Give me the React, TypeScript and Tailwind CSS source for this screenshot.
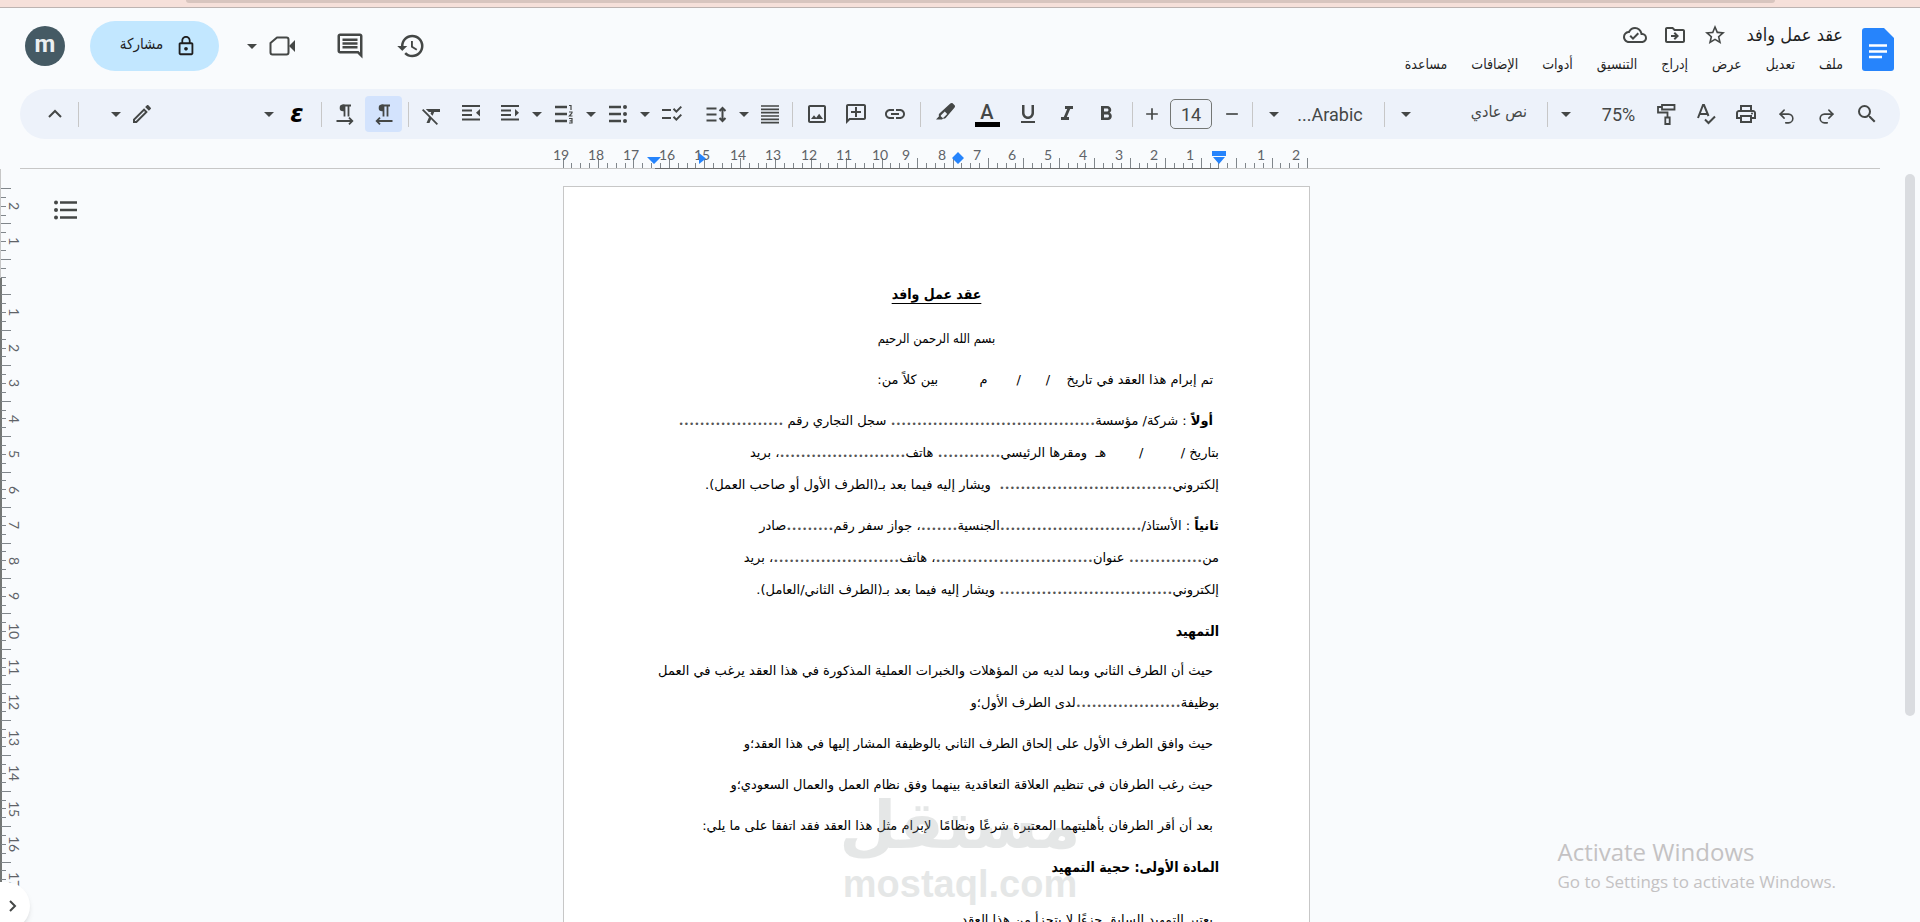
import type { ReactNode } from 'react';
import clsx from 'clsx';
import { Redo2, Undo2 } from 'lucide-react';
import {
  MdAdd,
  MdArrowDropDown,
  MdChecklistRtl,
  MdFormatBold,
  MdFormatClear,
  MdFormatItalic,
  MdFormatUnderlined,
  MdHistory,
  MdInsertLink,
  MdLockOutline,
  MdOutlineAddComment,
  MdOutlineCloudDone,
  MdOutlineComment,
  MdOutlineDriveFileMove,
  MdOutlineEdit,
  MdOutlineImage,
  MdOutlinePrint,
  MdRemove,
  MdSearch,
  MdStarBorder
} from 'react-icons/md';

const menus = ['ملف', 'تعديل', 'عرض', 'إدراج', 'التنسيق', 'أدوات', 'الإضافات', 'مساعدة'];

type Paragraph = {
  lines: string[];
  lead?: string;
  kind?: 'title' | 'center' | 'heading' | 'article';
  indent?: boolean;
};

const paragraphs: Paragraph[] = [
  { kind: 'title', lines: ['عقد عمل وافد'] },
  { kind: 'center', lines: ['بسم الله الرحمن الرحيم'] },
  { indent: true, lines: ['تم إبرام هذا العقد في تاريخ    /      /       م          بين كلاً من:'] },
  {
    indent: true,
    lead: 'أولاً',
    lines: [
      ' : شركة/ مؤسسة....................................... سجل التجاري رقم ....................',
      'بتاريخ /         /        هـ  ومقرها الرئيسي............ هاتف........................، بريد',
      'إلكتروني.................................  ويشار إليه فيما بعد بـ(الطرف الأول أو صاحب العمل).'
    ]
  },
  {
    lead: 'ثانياً',
    lines: [
      ' : الأستاذ/...........................الجنسية.......، جواز سفر رقم.........صادر',
      'من.............. عنوان..............................، هاتف........................، بريد',
      'إلكتروني................................. ويشار إليه فيما بعد بـ(الطرف الثاني/العامل).'
    ]
  },
  { kind: 'heading', lines: ['التمهيد'] },
  {
    indent: true,
    lines: [
      'حيث أن الطرف الثاني وبما لديه من المؤهلات والخبرات العملية المذكورة في هذا العقد يرغب في العمل',
      'بوظيفة....................لدى الطرف الأول؛و'
    ]
  },
  { indent: true, lines: ['حيث وافق الطرف الأول على إلحاق الطرف الثاني بالوظيفة المشار إليها في هذا العقد؛و'] },
  { indent: true, lines: ['حيث رغب الطرفان في تنظيم العلاقة التعاقدية بينهما وفق نظام العمل والعمال السعودي؛و'] },
  { indent: true, lines: ['بعد أن أقر الطرفان بأهليتهما المعتبرة شرعًا ونظامًا  لإبرام مثل هذا العقد فقد اتفقا على ما يلي:'] },
  { kind: 'article', lines: ['المادة الأولى: حجية التمهيد'] },
  { indent: true, lines: ['يعتبر التمهيد السابق جزءًا لا يتجزأ من هذا العقد'] }
];

function Tool({ label, className, children }: { label: string; className?: string; children: ReactNode }) {
  return (
    <button
      aria-label={label}
      className={clsx('flex h-9 shrink-0 items-center justify-center text-2xl text-[#444746]', className)}>
      {children}
    </button>
  );
}

function Caret({ label, className = 'w-[18px]' }: { label: string; className?: string }) {
  return (
    <Tool label={label} className={className}>
      <MdArrowDropDown className="shrink-0" />
    </Tool>
  );
}

function Divider({ className = 'w-3' }: { className?: string }) {
  return (
    <div className={clsx('flex h-[25px] shrink-0 justify-center', className)}>
      <div className="w-px bg-[#c7c7c7]" />
    </div>
  );
}

function Glyph({ children, strokeWidth = 2 }: { children: ReactNode; strokeWidth?: number }) {
  return (
    <svg width="24" height="24" viewBox="0 0 24 24" fill="none" stroke="currentColor" strokeWidth={strokeWidth} className="shrink-0">
      {children}
    </svg>
  );
}

function PilcrowIcon({ rtl }: { rtl?: boolean }) {
  return (
    <Glyph strokeWidth={1.8}>
      <path d="M18 3.500H9.500M11.500 3v11.500M15.500 3v11.500" />
      <path d="M11.500 2.600H10a3.300 3.300 0 0 0 0 6.600h1.500z" fill="currentColor" stroke="none" />
      <path d={rtl ? 'M20.500 19H4.500M8 15.700 4.700 19 8 22.300' : 'M3.500 19h16M16 15.700l3.300 3.300-3.300 3.300'} />
    </Glyph>
  );
}

function IndentIcon({ decrease }: { decrease?: boolean }) {
  return (
    <Glyph>
      <path d="M3 4h18M3 8.500h10M3 13h10M3 17.500h18" />
      <path d={decrease ? 'M17 7l4 3.800-4 3.800z' : 'M21 7l-4 3.800 4 3.800z'} fill="currentColor" stroke="none" />
    </Glyph>
  );
}

function NumberedIcon() {
  return (
    <Glyph strokeWidth={2.4}>
      <path d="M3 5h12M3 12h12M3 19h12" />
      <path d="M17 3.500h2v4.500M17 10h3v.8L17.400 14H20.500M17 16.500h3v4.500h-3m.6-2.200h2.400" strokeWidth="1.200" />
    </Glyph>
  );
}

function BulletsIcon() {
  return (
    <Glyph strokeWidth={2.4}>
      <path d="M3 5h12M3 12h12M3 19h12" />
      <g fill="currentColor" stroke="none">
        <circle cx="19" cy="5" r="2" />
        <circle cx="19" cy="12" r="2" />
        <circle cx="19" cy="19" r="2" />
      </g>
    </Glyph>
  );
}

function SpacingIcon() {
  return (
    <Glyph>
      <path d="M2.500 6.500h10M2.500 12.500h10M2.500 18.500h10M18.500 6v13M15.500 9l3-3 3 3M15.500 16l3 3 3-3" />
    </Glyph>
  );
}

function JustifyIcon() {
  return (
    <Glyph strokeWidth={1.7}>
      <path d="M3 4h18M3 7.300h18M3 10.600h18M3 14h18M3 17.300h18M3 20.600h18" />
    </Glyph>
  );
}

function PaintIcon() {
  return (
    <Glyph strokeWidth={1.8}>
      <path d="M8 3h12.500v4.500H8zM8 5H4v5.500h9.500V15M11.300 15.500h4.400V22h-4.400z" />
    </Glyph>
  );
}

function SpellIcon() {
  return (
    <Glyph>
      <path d="M4 16 9 3h1l4.500 11M6 12h7M11 17.500l3.500 3.500L21 14.500" />
    </Glyph>
  );
}

function HighlighterIcon() {
  return (
    <svg width="24" height="24" viewBox="0 0 24 24" fill="currentColor">
      <path d="M16.300 1.600 5.400 11.500c-.6.6-.8 1.300-.6 2.100l.2.700L2 17.500h6l1-1c1 .3 2 .1 2.700-.6L20.600 5.400c.6-.7.6-1.500 0-2.100l-2-2c-.7-.5-1.600-.4-2.300.3zM7 13.200l3.800-3.600 2.400 2.400-3.500 3.600c-.5.5-1.100.5-1.600 0l-1.100-1.100c-.4-.4-.4-.9 0-1.300z" />
    </svg>
  );
}

function MeetIcon() {
  return (
    <svg width="30" height="30" viewBox="0 0 30 30">
      <path d="M10 6.500h9.500a2 2 0 0 1 2 2v13a2 2 0 0 1-2 2h-14a2 2 0 0 1-2-2V12z" fill="none" stroke="currentColor" strokeWidth="2" strokeLinejoin="round" />
      <path d="M22 15l6-6v12z" fill="currentColor" />
    </svg>
  );
}

function DocsLogo() {
  return (
    <svg width="32" height="43" viewBox="0 0 32 43" className="mt-2 shrink-0">
      <path d="M3 0h19l10 10v30a3 3 0 0 1-3 3H3a3 3 0 0 1-3-3V3a3 3 0 0 1 3-3z" fill="#2684fc" />
      <path d="M7 17.500h18M7 23.500h18M7 29h13" stroke="#fff" strokeWidth="2.400" />
    </svg>
  );
}

function Header() {
  return (
    <header className="flex h-[81px] shrink-0 justify-between pr-[26px] pl-[25px] text-[#444746]">
      <div className="flex h-[76px] items-center">
        <button
          aria-label="الحساب"
          className="size-10 rounded-full bg-[#455a64] pb-1 font-['Roboto',sans-serif] text-2xl leading-none font-bold text-[#eceff1]">
          m
        </button>
        <button className="ml-[25px] flex h-[50px] w-[129px] items-center justify-center gap-3 rounded-full bg-[#c2e7ff] pl-2 text-[15px] text-[#1f1f1f]">
          <span className="pb-1">مشاركة</span>
          <MdLockOutline className="text-[22px]" />
        </button>
        <Caret label="خيارات الاجتماع" className="ml-[23px] w-5" />
        <Tool label="اجتماع" className="ml-[5px] w-[30px]">
          <MeetIcon />
        </Tool>
        <Tool label="التعليقات" className="ml-[33px] w-10">
          <MdOutlineComment className="text-[30px]" />
        </Tool>
        <Tool label="السجلّ" className="ml-[21px] w-10">
          <MdHistory className="text-[30px]" />
        </Tool>
      </div>
      <div dir="rtl" className="flex items-start gap-[19px] pt-3">
        <DocsLogo />
        <div className="flex flex-col gap-1">
          <div className="flex h-[30px] items-center gap-4">
            <h1 className="w-[100px] text-[18px] leading-7 whitespace-nowrap text-[#1f1f1f]">عقد عمل وافد</h1>
            <Tool label="تمييز بنجمة" className="w-6">
              <MdStarBorder />
            </Tool>
            <Tool label="نقل" className="w-6">
              <MdOutlineDriveFileMove className="shrink-0" />
            </Tool>
            <Tool label="حالة المستند" className="w-6">
              <MdOutlineCloudDone className="shrink-0" />
            </Tool>
          </div>
          <nav className="flex gap-6 text-sm leading-5 whitespace-nowrap text-[#1f1f1f]">
            {menus.map((menu) => (
              <button key={menu}>{menu}</button>
            ))}
          </nav>
        </div>
      </div>
    </header>
  );
}

function Toolbar() {
  return (
    <div className="mx-5 flex h-[50px] shrink-0 items-center rounded-full bg-[#edf2fa] pr-3 pl-[17px] font-['Roboto','DejaVu_Sans_Condensed',sans-serif] text-[#444746]">
      <Tool label="إخفاء القوائم" className="w-[35px]">
        <svg width="14" height="10" viewBox="0 0 14 10" fill="none" stroke="currentColor" strokeWidth="2">
          <path d="m1 8 6-6 6 6" />
        </svg>
      </Tool>
      <Divider />
      <Caret label="الوضع" className="ml-[22px] w-5" />
      <Tool label="تعديل" className="w-8">
        <MdOutlineEdit />
      </Tool>
      <div className="flex-1" />
      <Caret label="أدوات الإدخال" className="w-5" />
      <Tool label="إدخال بالعربية" className="w-9 font-['DejaVu_Sans',sans-serif] font-bold text-black">
        <span className="italic">ε</span>
      </Tool>
      <Divider />
      <Tool label="من اليسار إلى اليمين" className="w-9">
        <PilcrowIcon />
      </Tool>
      <Tool label="من اليمين إلى اليسار" className="ml-[2px] w-[37px] rounded bg-[#d3e3fd] text-[#041e49]">
        <PilcrowIcon rtl />
      </Tool>
      <Divider />
      <Tool label="محو التنسيق" className="w-9 pt-1">
        <MdFormatClear />
      </Tool>
      <Tool label="زيادة المسافة البادئة" className="w-[42px]">
        <IndentIcon />
      </Tool>
      <Tool label="إنقاص المسافة البادئة" className="w-9">
        <IndentIcon decrease />
      </Tool>
      <Caret label="خيارات القائمة المرقّمة" />
      <Tool label="قائمة مرقّمة" className="w-9">
        <NumberedIcon />
      </Tool>
      <Caret label="خيارات القائمة النقطية" />
      <Tool label="قائمة نقطية" className="w-9">
        <BulletsIcon />
      </Tool>
      <Caret label="خيارات قائمة التحقّق" />
      <Tool label="قائمة تحقّق" className="w-9">
        <MdChecklistRtl />
      </Tool>
      <Tool label="تباعد الأسطر" className="ml-2 w-9">
        <SpacingIcon />
      </Tool>
      <Caret label="المحاذاة" className="w-5" />
      <Tool label="ضبط" className="w-8">
        <JustifyIcon />
      </Tool>
      <Divider />
      <Tool label="إدراج صورة" className="w-[38px]">
        <MdOutlineImage />
      </Tool>
      <Tool label="إضافة تعليق" className="w-10">
        <MdOutlineAddComment className="-scale-x-100" />
      </Tool>
      <Tool label="إدراج رابط" className="w-[38px]">
        <MdInsertLink />
      </Tool>
      <Divider />
      <Tool label="لون التمييز" className="w-10">
        <HighlighterIcon />
      </Tool>
      <Tool label="لون النص" className="w-[42px] flex-col">
        <span className="text-xl leading-5 font-medium">A</span>
        <span className="h-[5px] w-[25px] bg-black" />
      </Tool>
      <Tool label="تسطير" className="w-10">
        <MdFormatUnderlined />
      </Tool>
      <Tool label="مائل" className="w-[38px]">
        <MdFormatItalic />
      </Tool>
      <Tool label="غامق" className="w-10">
        <MdFormatBold />
      </Tool>
      <Divider />
      <Tool label="تكبير الخط" className="w-7">
        <MdAdd className="text-xl" />
      </Tool>
      <input
        aria-label="حجم الخط"
        defaultValue="14"
        className="mx-1 h-[30px] w-[42px] shrink-0 rounded-[5px] border border-[#747775] text-center text-[18px]"
      />
      <Tool label="تصغير الخط" className="w-8">
        <MdRemove className="text-xl" />
      </Tool>
      <Divider className="w-2" />
      <Caret label="قائمة الخطوط" className="ml-2 w-5" />
      <button className="h-9 w-24 shrink-0 pr-1 text-[18px]">...Arabic</button>
      <Divider className="w-2" />
      <Caret label="قائمة الأنماط" className="ml-2 w-5" />
      <button dir="rtl" className="h-9 w-[127px] shrink-0 pr-4 pb-1 text-right text-base">
        نص عادي
      </button>
      <Divider className="w-2" />
      <Caret label="خيارات التكبير" className="w-[30px]" />
      <button className="ml-[10px] h-9 w-[55px] shrink-0 text-[18px]">75%</button>
      <Tool label="نسخ التنسيق" className="w-10">
        <PaintIcon />
      </Tool>
      <Tool label="التدقيق الإملائي" className="w-10">
        <SpellIcon />
      </Tool>
      <Tool label="طباعة" className="w-10">
        <MdOutlinePrint />
      </Tool>
      <Tool label="تراجع" className="w-10 pt-1">
        <Undo2 size={19} />
      </Tool>
      <Tool label="إعادة" className="w-10 pt-1">
        <Redo2 size={19} />
      </Tool>
      <Tool label="بحث" className="w-[42px]">
        <MdSearch />
      </Tool>
    </div>
  );
}

// One centimetre at 75% zoom.
const CM = 35.45;
const range = (n: number) => Array.from({ length: n }, (_, i) => i);

function HorizontalRuler() {
  const labels = ['2', '1', '', ...range(19).map((i) => String(i + 1))];
  return (
    <svg width="764" height="30" viewBox="0 0 764 30" className="shrink-0 font-['Lato',sans-serif] text-sm">
      {range(85).map((i) => {
        const x = Math.round(753 - (i * CM) / 4);
        return <path key={i} d={`M${x + 0.5} ${i % 4 ? 24 : 19}V29`} stroke="#80868b" />;
      })}
      {labels.map((label, i) => (
        <text
          key={i}
          x={Math.round(753 - i * CM) - (label.length > 1 ? 2 : 11)}
          y="21"
          textAnchor="middle"
          fill="#5f6368">
          {label}
        </text>
      ))}
      <path d="M101 29.500H665" stroke="#6b6b6b" />
      <path d="M93 18h14l-7 7zM145 14l7 5.500-7 5.500zM404 13l6 6-6 6-6-6zM658 12h14v5h-14zM659 18h12l-6 7z" fill="#2684fc" />
    </svg>
  );
}

function VerticalRuler() {
  const labels = ['2', '1', '', ...range(17).map((i) => String(i + 1))];
  return (
    <svg width="24" height="754" viewBox="0 0 24 754" className="shrink-0 font-['Lato',sans-serif] text-sm">
      <path d="M.5 0v109" stroke="#c7c7c7" />
      <path d="M1 109v645" stroke="#747775" strokeWidth="2" />
      {range(79).map((i) => {
        const y = Math.round(19 + (i * CM) / 4);
        return <path key={i} d={`M1 ${y + 0.5}H${i % 4 ? 6 : 11}`} stroke="#80868b" />;
      })}
      {labels.map((label, i) => (
        <text key={i} transform={`translate(9 ${Math.round(37 + i * CM)}) rotate(90)`} textAnchor="middle" fill="#5f6368">
          {label}
        </text>
      ))}
    </svg>
  );
}

function Line({ text, lead }: { text: string; lead?: string }) {
  // Blanks to fill in are set larger than the words around them.
  const parts = text.split(/(\.{5,})/);
  return (
    <>
      {lead && <b>{lead}</b>}
      {parts.map((part, i) =>
        part.startsWith('.....') ? (
          <span key={i} className="font-['Liberation_Serif',serif] text-[21px] leading-none text-[#555555]">
            {part}
          </span>
        ) : (
          part
        )
      )}
    </>
  );
}

function Page() {
  return (
    <article
      dir="rtl"
      className="w-[747px] shrink-0 border border-[#c7c7c7] bg-white pt-[91px] pr-[90px] pb-[90px] font-['DejaVu_Sans',sans-serif] text-[13px] text-black">
      {paragraphs.map(({ lines, lead, kind, indent }, index) => (
        <div
          key={index}
          className={clsx('whitespace-pre', {
            'mb-[9px]': !kind || kind === 'center',
            'mb-2': kind === 'heading',
            "pl-[90px] text-center font-['DejaVu_Sans_Condensed',sans-serif]": kind === 'title' || kind === 'center',
            'mb-[13px] text-sm font-bold underline underline-offset-4': kind === 'title',
            "font-['DejaVu_Sans_Condensed',sans-serif] text-sm font-bold": kind === 'heading' || kind === 'article',
            'mb-[21px]': kind === 'article'
          })}>
          {lines.map((line, i) => (
            <p key={i} className={clsx('h-8 leading-8', indent && i === 0 && 'pr-[6px]')}>
              <Line text={line} lead={i === 0 ? lead : undefined} />
            </p>
          ))}
        </div>
      ))}
    </article>
  );
}

export default function App() {
  return (
    <div className="relative flex h-screen flex-col overflow-hidden bg-[#f9fbfd] font-['DejaVu_Sans_Condensed','DejaVu_Sans',sans-serif]">
      <div className="h-2 shrink-0 border-b border-[#bdb3b1] bg-[#f6e0da] pr-[145px] pl-[186px]">
        <div className="h-[3px] rounded-b-lg bg-[#d8c5bf]" />
      </div>
      <Header />
      <Toolbar />
      <div className="mr-10 ml-5 flex h-[30px] shrink-0 justify-center border-b border-[#c7c7c7] pr-7">
        <HorizontalRuler />
      </div>
      <main className="relative flex min-h-0 flex-1 overflow-hidden">
        <div className="flex flex-1 basis-0">
          <VerticalRuler />
          <button aria-label="إظهار مخطّط المستند" className="mt-[31px] ml-[30px] h-5 w-6 text-[#444746]">
            <svg width="24" height="20" viewBox="0 0 24 20" fill="currentColor">
              <circle cx="2" cy="2.500" r="2" />
              <circle cx="2" cy="10" r="2" />
              <circle cx="2" cy="17.500" r="2" />
              <path d="M6 1.200h17v2.600H6zM6 8.700h17v2.600H6zM6 16.200h17v2.600H6z" />
            </svg>
          </button>
        </div>
        <div className="flex items-start pt-[17px]">
          <Page />
        </div>
        <div className="flex-1 basis-0" />
        <div className="flex w-[47px] justify-end pt-[5px] pr-[5px]">
          <div className="h-[542px] w-[10px] rounded-full bg-[#dadce0]" />
        </div>
        <button
          aria-label="إظهار اللوحة"
          className="absolute -bottom-2 left-0 flex h-12 w-[30px] items-center rounded-r-full bg-white pl-2 text-[#444746] shadow-md">
          <svg width="10" height="12" viewBox="0 0 10 12" fill="none" stroke="currentColor" strokeWidth="2">
            <path d="m2 1 5 5-5 5" />
          </svg>
        </button>
        <div className="pointer-events-none absolute inset-x-0 bottom-4 flex flex-col items-center text-[#9ca3a2] opacity-25">
          <span className="h-[76px] font-['DejaVu_Sans',sans-serif] text-[66px] leading-20 font-bold">مستقل</span>
          <span className="font-['Liberation_Sans',sans-serif] text-[38px] leading-[44px] font-bold">mostaql.com</span>
        </div>
        <div className="pointer-events-none absolute right-[84px] bottom-[26px] font-['Open_Sans',sans-serif] text-[#c4c2c3]">
          <p className="text-2xl leading-8">Activate Windows</p>
          <p className="text-[17px] leading-7">Go to Settings to activate Windows.</p>
        </div>
      </main>
    </div>
  );
}
